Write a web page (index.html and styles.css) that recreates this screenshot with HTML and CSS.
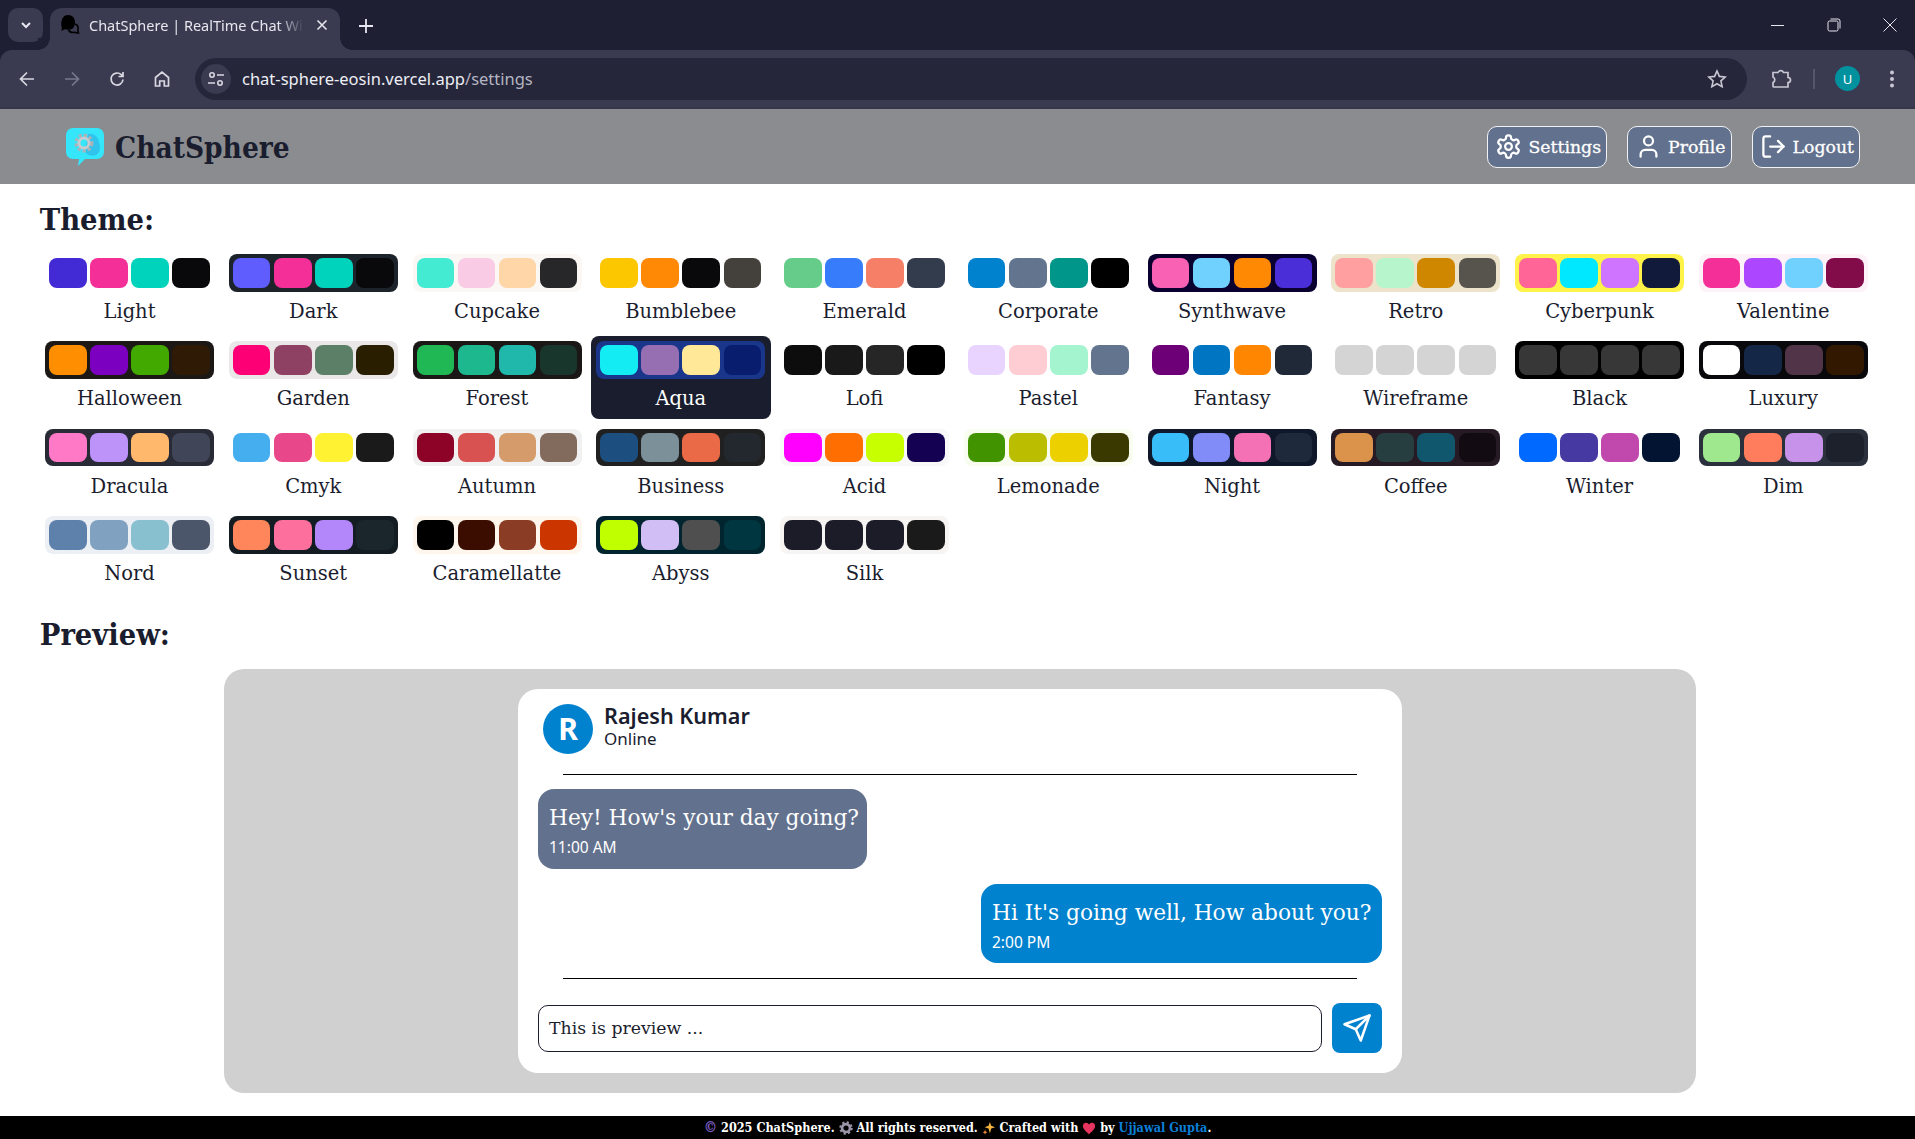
FILE: index.html
```html
<!DOCTYPE html>
<html lang="en">
<head>
<meta charset="utf-8">
<title>ChatSphere | RealTime Chat With Friends</title>
<link rel="stylesheet" href="styles.css">
</head>
<body>
<div class="page">
  <div class="chrome">
  <div class="tabstrip">
    <div class="tabsearch"><svg width="14" height="14" viewBox="0 0 14 14" fill="none" stroke="#e6e6ee" stroke-width="2"><path d="M3 5l4 4 4-4"/></svg></div>
    <div class="tab">
      <svg class="favicon" width="20" height="22" viewBox="0 0 20 22"><path d="M8 1c4.400 0 7 3 7 7 0 3-1 6-3 7-2 .8-5 .8-7 .2L1 17c1-1.500 1-3 .6-4C.4 7 2.500 1 8 1z" fill="#000"/><path d="M15 10c2.500 1 3.500 3 3 5-.3 1.500 0 3 .5 4-1.500 0-3-.5-4-.7-2.500.5-5-.5-6-2.300" fill="none" stroke="#000" stroke-width="1.600"/></svg>
      <span class="tabtitle">ChatSphere | RealTime Chat With Friends</span>
      <svg class="tabclose" width="12" height="12" viewBox="0 0 12 12" stroke="#e6e6ee" stroke-width="1.600"><path d="M1.500 1.500l9 9M10.500 1.500l-9 9"/></svg>
    </div>
    <svg class="newtab" width="14" height="14" viewBox="0 0 14 14" stroke="#e6e6ee" stroke-width="1.800"><path d="M7 0v14M0 7h14"/></svg>
    <div class="winctl">
      <svg width="14" height="14" viewBox="0 0 14 14" stroke="#e6e6ee" stroke-width="1"><path d="M0 7.500h13"/></svg>
      <svg width="14" height="14" viewBox="0 0 14 14" fill="none" stroke="#e6e6ee" stroke-width="1"><rect x="1" y="3" width="10" height="10" rx="1.500"/><path d="M3.500 1h7.500a2 2 0 0 1 2 2v7.500"/></svg>
      <svg width="14" height="14" viewBox="0 0 14 14" stroke="#e6e6ee" stroke-width="1"><path d="M.5.500l13 13M13.500.500l-13 13"/></svg>
    </div>
  </div>
  <div class="toolbar">
    <svg class="tbtn" width="18" height="18" viewBox="0 0 18 18" fill="none" stroke="#d8d8e2" stroke-width="1.700"><path d="M16 9H2.500M9 2.500L2.500 9 9 15.500"/></svg>
    <svg class="tbtn" width="18" height="18" viewBox="0 0 18 18" fill="none" stroke="#77788a" stroke-width="1.700"><path d="M2 9h13.500M9 2.500L15.500 9 9 15.500"/></svg>
    <svg class="tbtn" width="18" height="18" viewBox="0 0 18 18" fill="none" stroke="#d8d8e2" stroke-width="1.700"><path d="M15 9.500a6 6 0 1 1-1.800-4.800L15 6.500M15 2v4.500h-4.500"/></svg>
    <svg class="tbtn" width="18" height="18" viewBox="0 0 18 18" fill="none" stroke="#d8d8e2" stroke-width="1.700"><path d="M2.500 7.500L9 2l6.500 5.500V16h-4.200v-5H6.700v5H2.500z"/></svg>
    <div class="omnibox">
      <div class="sitebtn"><svg width="18" height="18" viewBox="0 0 18 18" fill="none" stroke="#d8d8e2" stroke-width="1.600"><circle cx="5" cy="5" r="2.200"/><path d="M10 5h7M1 13h7"/><circle cx="13" cy="13" r="2.200"/></svg></div>
      <span class="url">chat-sphere-eosin.vercel.app<span class="urlpath">/settings</span></span>
      <svg class="star" width="20" height="20" viewBox="0 0 20 20" fill="none" stroke="#c8c8d4" stroke-width="1.600"><path d="M10 2l2.400 5.400 5.800.6-4.300 3.900 1.200 5.700-5.100-2.900-5.100 2.900 1.200-5.700L1.800 8l5.800-.6z"/></svg>
    </div>
    <svg class="ext" width="22" height="22" viewBox="0 0 22 22" fill="none" stroke="#c8c8d4" stroke-width="1.700"><path d="M3 4.500h5a3 3 0 0 1 5.500 0H18v5a2.500 2.500 0 0 1 0 5v4.500H4a1 1 0 0 1-1-1v-3.500a3 3 0 0 0 0-5.500z"/></svg>
    <span class="tsep"></span>
    <span class="avatar-u">U</span>
    <svg class="kebab" width="6" height="18" viewBox="0 0 6 18" fill="#c8c8d4"><circle cx="3" cy="2.500" r="2"/><circle cx="3" cy="9" r="2"/><circle cx="3" cy="15.500" r="2"/></svg>
  </div>
  </div>

  <header class="navbar">
    <div class="brand">
      <svg class="logo" width="38" height="38" viewBox="0 0 38 38"><path d="M7 0h24a7 7 0 0 1 7 7v17a7 7 0 0 1-7 7H19l-7 7 1-7H7a7 7 0 0 1-7-7V7a7 7 0 0 1 7-7z" fill="#35e6fb"/><path d="M22 6c6-1 11 3 11 9 2 4 1 10-3 12-4 2-9 0-11-3z" fill="#30c4ec"/><circle cx="18" cy="15" r="7.500" fill="none" stroke="#a9b2b8" stroke-width="4" stroke-dasharray="3 2"/><circle cx="18" cy="15" r="5" fill="none" stroke="#c4cbd0" stroke-width="3"/></svg>
      <span class="brandname">ChatSphere</span>
    </div>
    <nav class="navlinks">
      <a class="navbtn"><svg class="navicon" viewBox="0 0 24 24"><path d="M12.220 2h-.44a2 2 0 0 0-2 2v.18a2 2 0 0 1-1 1.730l-.43.25a2 2 0 0 1-2 0l-.15-.08a2 2 0 0 0-2.730.73l-.22.38a2 2 0 0 0 .73 2.730l.15.1a2 2 0 0 1 1 1.720v.51a2 2 0 0 1-1 1.740l-.15.09a2 2 0 0 0-.73 2.730l.22.38a2 2 0 0 0 2.730.73l.15-.08a2 2 0 0 1 2 0l.43.25a2 2 0 0 1 1 1.730V20a2 2 0 0 0 2 2h.44a2 2 0 0 0 2-2v-.18a2 2 0 0 1 1-1.730l.43-.25a2 2 0 0 1 2 0l.15.08a2 2 0 0 0 2.730-.73l.22-.39a2 2 0 0 0-.73-2.730l-.15-.08a2 2 0 0 1-1-1.740v-.5a2 2 0 0 1 1-1.740l.15-.09a2 2 0 0 0 .73-2.730l-.22-.38a2 2 0 0 0-2.730-.73l-.15.08a2 2 0 0 1-2 0l-.43-.25a2 2 0 0 1-1-1.730V4a2 2 0 0 0-2-2z"/><circle cx="12" cy="12" r="3"/></svg>Settings</a>
      <a class="navbtn"><svg class="navicon" viewBox="0 0 24 24"><path d="M19 21v-2a4 4 0 0 0-4-4H9a4 4 0 0 0-4 4v2"/><circle cx="12" cy="7" r="4"/></svg>Profile</a>
      <a class="navbtn"><svg class="navicon" viewBox="0 0 24 24"><path d="M9 21H5a2 2 0 0 1-2-2V5a2 2 0 0 1 2-2h4"/><polyline points="16 17 21 12 16 7"/><line x1="21" y1="12" x2="9" y2="12"/></svg>Logout</a>
    </nav>
  </header>

  <main class="main">
    <h2 class="heading">Theme:</h2>
    <div class="grid">
      <div class="tile t-light"><div class="box"><i class="sw s1"></i><i class="sw s2"></i><i class="sw s3"></i><i class="sw s4"></i></div><span class="lbl">Light</span></div>
      <div class="tile t-dark"><div class="box"><i class="sw s1"></i><i class="sw s2"></i><i class="sw s3"></i><i class="sw s4"></i></div><span class="lbl">Dark</span></div>
      <div class="tile t-cupcake"><div class="box"><i class="sw s1"></i><i class="sw s2"></i><i class="sw s3"></i><i class="sw s4"></i></div><span class="lbl">Cupcake</span></div>
      <div class="tile t-bumblebee"><div class="box"><i class="sw s1"></i><i class="sw s2"></i><i class="sw s3"></i><i class="sw s4"></i></div><span class="lbl">Bumblebee</span></div>
      <div class="tile t-emerald"><div class="box"><i class="sw s1"></i><i class="sw s2"></i><i class="sw s3"></i><i class="sw s4"></i></div><span class="lbl">Emerald</span></div>
      <div class="tile t-corporate"><div class="box"><i class="sw s1"></i><i class="sw s2"></i><i class="sw s3"></i><i class="sw s4"></i></div><span class="lbl">Corporate</span></div>
      <div class="tile t-synthwave"><div class="box"><i class="sw s1"></i><i class="sw s2"></i><i class="sw s3"></i><i class="sw s4"></i></div><span class="lbl">Synthwave</span></div>
      <div class="tile t-retro"><div class="box"><i class="sw s1"></i><i class="sw s2"></i><i class="sw s3"></i><i class="sw s4"></i></div><span class="lbl">Retro</span></div>
      <div class="tile t-cyberpunk"><div class="box"><i class="sw s1"></i><i class="sw s2"></i><i class="sw s3"></i><i class="sw s4"></i></div><span class="lbl">Cyberpunk</span></div>
      <div class="tile t-valentine"><div class="box"><i class="sw s1"></i><i class="sw s2"></i><i class="sw s3"></i><i class="sw s4"></i></div><span class="lbl">Valentine</span></div>
      <div class="tile t-halloween"><div class="box"><i class="sw s1"></i><i class="sw s2"></i><i class="sw s3"></i><i class="sw s4"></i></div><span class="lbl">Halloween</span></div>
      <div class="tile t-garden"><div class="box"><i class="sw s1"></i><i class="sw s2"></i><i class="sw s3"></i><i class="sw s4"></i></div><span class="lbl">Garden</span></div>
      <div class="tile t-forest"><div class="box"><i class="sw s1"></i><i class="sw s2"></i><i class="sw s3"></i><i class="sw s4"></i></div><span class="lbl">Forest</span></div>
      <div class="tile active t-aqua"><div class="box"><i class="sw s1"></i><i class="sw s2"></i><i class="sw s3"></i><i class="sw s4"></i></div><span class="lbl">Aqua</span></div>
      <div class="tile t-lofi"><div class="box"><i class="sw s1"></i><i class="sw s2"></i><i class="sw s3"></i><i class="sw s4"></i></div><span class="lbl">Lofi</span></div>
      <div class="tile t-pastel"><div class="box"><i class="sw s1"></i><i class="sw s2"></i><i class="sw s3"></i><i class="sw s4"></i></div><span class="lbl">Pastel</span></div>
      <div class="tile t-fantasy"><div class="box"><i class="sw s1"></i><i class="sw s2"></i><i class="sw s3"></i><i class="sw s4"></i></div><span class="lbl">Fantasy</span></div>
      <div class="tile t-wireframe"><div class="box"><i class="sw s1"></i><i class="sw s2"></i><i class="sw s3"></i><i class="sw s4"></i></div><span class="lbl">Wireframe</span></div>
      <div class="tile t-black"><div class="box"><i class="sw s1"></i><i class="sw s2"></i><i class="sw s3"></i><i class="sw s4"></i></div><span class="lbl">Black</span></div>
      <div class="tile t-luxury"><div class="box"><i class="sw s1"></i><i class="sw s2"></i><i class="sw s3"></i><i class="sw s4"></i></div><span class="lbl">Luxury</span></div>
      <div class="tile t-dracula"><div class="box"><i class="sw s1"></i><i class="sw s2"></i><i class="sw s3"></i><i class="sw s4"></i></div><span class="lbl">Dracula</span></div>
      <div class="tile t-cmyk"><div class="box"><i class="sw s1"></i><i class="sw s2"></i><i class="sw s3"></i><i class="sw s4"></i></div><span class="lbl">Cmyk</span></div>
      <div class="tile t-autumn"><div class="box"><i class="sw s1"></i><i class="sw s2"></i><i class="sw s3"></i><i class="sw s4"></i></div><span class="lbl">Autumn</span></div>
      <div class="tile t-business"><div class="box"><i class="sw s1"></i><i class="sw s2"></i><i class="sw s3"></i><i class="sw s4"></i></div><span class="lbl">Business</span></div>
      <div class="tile t-acid"><div class="box"><i class="sw s1"></i><i class="sw s2"></i><i class="sw s3"></i><i class="sw s4"></i></div><span class="lbl">Acid</span></div>
      <div class="tile t-lemonade"><div class="box"><i class="sw s1"></i><i class="sw s2"></i><i class="sw s3"></i><i class="sw s4"></i></div><span class="lbl">Lemonade</span></div>
      <div class="tile t-night"><div class="box"><i class="sw s1"></i><i class="sw s2"></i><i class="sw s3"></i><i class="sw s4"></i></div><span class="lbl">Night</span></div>
      <div class="tile t-coffee"><div class="box"><i class="sw s1"></i><i class="sw s2"></i><i class="sw s3"></i><i class="sw s4"></i></div><span class="lbl">Coffee</span></div>
      <div class="tile t-winter"><div class="box"><i class="sw s1"></i><i class="sw s2"></i><i class="sw s3"></i><i class="sw s4"></i></div><span class="lbl">Winter</span></div>
      <div class="tile t-dim"><div class="box"><i class="sw s1"></i><i class="sw s2"></i><i class="sw s3"></i><i class="sw s4"></i></div><span class="lbl">Dim</span></div>
      <div class="tile t-nord"><div class="box"><i class="sw s1"></i><i class="sw s2"></i><i class="sw s3"></i><i class="sw s4"></i></div><span class="lbl">Nord</span></div>
      <div class="tile t-sunset"><div class="box"><i class="sw s1"></i><i class="sw s2"></i><i class="sw s3"></i><i class="sw s4"></i></div><span class="lbl">Sunset</span></div>
      <div class="tile t-caramellatte"><div class="box"><i class="sw s1"></i><i class="sw s2"></i><i class="sw s3"></i><i class="sw s4"></i></div><span class="lbl">Caramellatte</span></div>
      <div class="tile t-abyss"><div class="box"><i class="sw s1"></i><i class="sw s2"></i><i class="sw s3"></i><i class="sw s4"></i></div><span class="lbl">Abyss</span></div>
      <div class="tile t-silk"><div class="box"><i class="sw s1"></i><i class="sw s2"></i><i class="sw s3"></i><i class="sw s4"></i></div><span class="lbl">Silk</span></div>
    </div>

    <h2 class="heading preview-heading">Preview:</h2>
    <section class="preview">
      <div class="card">
        <div class="chathead">
          <div class="avatar">R</div>
          <div class="who"><div class="name">Rajesh Kumar</div><div class="status">Online</div></div>
        </div>
        <hr class="rule">
        <div class="bubble left"><div class="msg">Hey! How's your day going?</div><div class="time">11:00 AM</div></div>
        <div class="bubble right"><div class="msg">Hi It's going well, How about you?</div><div class="time">2:00 PM</div></div>
        <hr class="rule rule2">
        <div class="composer">
          <div class="input">This is preview ...</div>
          <div class="send"><svg width="30" height="30" viewBox="0 0 24 24" fill="none" stroke="#fff" stroke-width="2" stroke-linecap="round" stroke-linejoin="round"><path d="m22 2-7 20-4-9-9-4Z"/><path d="M22 2 11 13"/></svg></div>
        </div>
      </div>
    </section>
  </main>

  <footer class="footer"><span class="copy">©</span> 2025 ChatSphere. <svg class="emoji" viewBox="0 0 16 16"><circle cx="8" cy="8" r="4.500" fill="none" stroke="#9c94a8" stroke-width="3"/><circle cx="8" cy="8" r="6.500" fill="none" stroke="#9c94a8" stroke-width="2.400" stroke-dasharray="2.500 2.600"/></svg> All rights reserved. <svg class="emoji" viewBox="0 0 16 16"><path d="M9 1l1.500 4.500L15 7l-4.500 1.500L9 14 7.500 8.500 3 7l4.500-1.500z" fill="#f4b53f"/><path d="M3.500 10l.8 2 2 .8-2 .8-.8 2-.8-2-2-.8 2-.8z" fill="#f08a3c"/></svg> Crafted with <svg class="emoji" viewBox="0 0 16 16"><path d="M8 15C3 11 1 8.500 1 5.500A3.700 3.700 0 0 1 8 4a3.700 3.700 0 0 1 7 1.500C15 8.500 13 11 8 15z" fill="#e8355f"/></svg> by <span class="author">Ujjawal Gupta</span>.</footer>
</div>
</body>
</html>
```
FILE: styles.css
```css
* { box-sizing: border-box; }
html, body { margin: 0; padding: 0; height: 100%; background: #fff; overflow: hidden; }
.page { display: flex; flex-direction: column; height: 1139px; font-family: "DejaVu Serif", serif; color: #1a1d2e; }

/* browser chrome */
.chrome { background: #1e1f33; flex: none; }
.tabstrip { height: 50px; display: flex; align-items: flex-start; padding: 8px 0 0 8px; }
.tabsearch { width: 35px; height: 34px; border-radius: 10px; background: #3a3b50; display: flex; align-items: center; justify-content: center; }
.tab { position: relative; width: 290px; height: 42px; margin-left: 7px; background: #3a3b50; border-radius: 12px 12px 0 0; display: flex; align-items: center; padding: 0 12px 8px 10px; font: 14.5px "Noto Sans", sans-serif; color: #e6e6ee; }
.tab::before, .tab::after { content: ""; position: absolute; bottom: 0; width: 12px; height: 12px; }
.tab::before { left: -12px; background: radial-gradient(circle at 0 0, #1e1f33 11.5px, #3a3b50 12px); }
.tab::after { right: -12px; background: radial-gradient(circle at 100% 0, #1e1f33 11.5px, #3a3b50 12px); }
.favicon { flex: none; }
.tabtitle { flex: 1; margin-left: 9px; white-space: nowrap; overflow: hidden; -webkit-mask-image: linear-gradient(90deg, #000 88%, transparent); mask-image: linear-gradient(90deg, #000 88%, transparent); }
.tabclose { flex: none; margin-left: 12px; }
.newtab { margin: 11px 0 0 19px; }
.winctl { margin-left: auto; display: flex; gap: 42px; padding: 10px 18px 0 0; }
.toolbar { height: 59px; background: #3a3b50; border-radius: 12px 12px 0 0; display: flex; align-items: center; padding: 0 0 0 18px; border-bottom: 2px solid #35364a; }
.tbtn { margin-right: 27px; flex: none; }
.tbtn:nth-child(4) { margin-right: 24px; }
.omnibox { width: 1552px; height: 42px; border-radius: 21px; background: #25263a; display: flex; align-items: center; padding: 0 20px 0 5px; flex: none; }
.sitebtn { width: 30px; height: 30px; margin-left: 1px; border-radius: 50%; background: #3a3b50; display: flex; align-items: center; justify-content: center; }
.url { margin-left: 11px; font: 16.5px "Noto Sans", sans-serif; color: #eeeef4; white-space: nowrap; }
.urlpath { color: #b4b4c2; }
.star { margin-left: auto; }
.ext { margin-left: 23px; }
.tsep { width: 2px; height: 20px; background: #55566a; margin-left: 21px; }
.avatar-u { width: 25px; height: 25px; margin-left: 20px; border-radius: 50%; background: #00919f; color: #fff; font: 13px "Noto Sans", sans-serif; display: flex; align-items: center; justify-content: center; }
.kebab { margin-left: 29px; }

/* navbar */
.navbar { height: 75px; background: #8b8c8f; display: flex; align-items: center; justify-content: space-between; padding: 0 55px 0 66px; flex: none; }
.brand { display: flex; align-items: center; gap: 11px; }
.logo { flex: none; }
.brandname { padding-top: 2px; font-family: "DejaVu Serif Condensed", "DejaVu Serif", serif; font-size: 29.5px; font-weight: 700; color: #1a1d2e; }
.navlinks { display: flex; gap: 20px; }
.navbtn { height: 42px; display: flex; align-items: center; gap: 6px; padding: 0 5px 0 7px; background: #62718d; border: 1.5px solid #f2f2f2; border-radius: 10px; color: #fff; font-size: 17.3px; -webkit-text-stroke: .3px #fff; }
.navicon { width: 27px; height: 27px; fill: none; stroke: #fff; stroke-width: 2; stroke-linecap: round; stroke-linejoin: round; flex: none; }

/* main */
.main { flex: 1; padding: 14px 0 0 39.75px; }
.heading { margin: 0; font-family: "DejaVu Serif Condensed", "DejaVu Serif", serif; font-size: 30.5px; line-height: 42px; font-weight: 700; color: #1a1d2e; }
.grid { margin-top: 9px; display: grid; grid-template-columns: repeat(10, 179.5px); column-gap: 4.25px; row-gap: 4.4px; }
.tile { height: 83px; padding: 5px 5.25px; border-radius: 8px; display: flex; flex-direction: column; align-items: stretch; }
.box { height: 37.5px; padding: 4px; border-radius: 8px; background: var(--b); display: flex; gap: 3.4px; }
.sw { flex: 1; border-radius: 8px; }
.s1 { background: var(--c1); }
.s2 { background: var(--c2); }
.s3 { background: var(--c3); }
.s4 { background: var(--c4); }
.lbl { margin-top: 8.5px; font-size: 19.5px; line-height: 24px; text-align: center; color: #1a1d2e; }
.tile.active { background: #1a1d2e; }
.tile.active .lbl { color: #fff; }

.preview-heading { margin-top: 19.2px; }
.preview { width: 1472px; height: 424px; margin: 13.5px 0 0 184.25px; padding-top: 20px; background: #d0d0d0; border-radius: 20px; }
.card { width: 884px; height: 384.500px; margin: 0 auto; padding: 15px 20px 0; background: #fff; border-radius: 20px; display: flex; flex-direction: column; }
.chathead { display: flex; align-items: center; gap: 11px; padding-left: 5px; height: 50px; flex: none; }
.avatar { width: 50px; height: 50px; border-radius: 50%; background: #0082ce; color: #fff; font: 700 30px "Noto Sans", sans-serif; display: flex; align-items: center; justify-content: center; }
.who { padding-bottom: 5px; }
.name { font: 600 21.6px/26px "Noto Sans", sans-serif; color: #1a1d2e; }
.status { font: 17px/20px "Noto Sans", sans-serif; color: #1a1d2e; }
.rule { width: 794px; height: 1px; margin: 20px 25px .5px; background: #000; border: 0; flex: none; }
.bubble { margin-top: 14px; padding: 11px; border-radius: 16px; color: #fff; flex: none; }
.bubble.left { align-self: flex-start; width: 329px; height: 80px; background: #62718d; }
.bubble.right { align-self: flex-end; width: 401px; height: 79px; margin-top: 15px; background: #0082ce; }
.msg { padding-top: 1px; font-size: 21.7px; line-height: 33px; white-space: nowrap; }
.time { margin-top: 3px; font: 15.5px/20px "Noto Sans", sans-serif; }
.rule2 { margin-top: 15px; }
.composer { margin-top: 23.5px; display: flex; align-items: center; gap: 10px; }
.input { width: 784px; height: 47px; border: 1.5px solid #1a1d2e; border-radius: 10px; padding-left: 10px; display: flex; align-items: center; font-size: 17.3px; color: #1a1d2e; }
.send { width: 50px; height: 50px; border-radius: 8px; background: #0082ce; display: flex; align-items: center; justify-content: center; }

/* footer */
.footer { height: 23px; background: #000; color: #fff; line-height: 23px; text-align: center; font-family: "DejaVu Serif Condensed", "DejaVu Serif", serif; font-size: 12.55px; font-weight: 700; white-space: nowrap; flex: none; }
.copy { color: #7a5cc0; font-size: 15px; }
.author { color: #0a7fd8; }
.emoji { width: 14px; height: 14px; vertical-align: -2.5px; }

/* theme palettes */
.t-light { --b:#ffffff; --c1:#422ad5; --c2:#f43098; --c3:#00d3bb; --c4:#09090b; }
.t-dark { --b:#1d232a; --c1:#605dff; --c2:#f43098; --c3:#00d3bb; --c4:#09090b; }
.t-cupcake { --b:#faf7f5; --c1:#44ebd3; --c2:#f9cbe5; --c3:#ffd6a7; --c4:#27272a; }
.t-bumblebee { --b:#ffffff; --c1:#fdc700; --c2:#ff8904; --c3:#09090b; --c4:#44403b; }
.t-emerald { --b:#ffffff; --c1:#66cc8a; --c2:#377cfb; --c3:#f68067; --c4:#333c4d; }
.t-corporate { --b:#ffffff; --c1:#0082ce; --c2:#62748e; --c3:#009689; --c4:#000000; }
.t-synthwave { --b:#09002f; --c1:#f861b4; --c2:#71d1fe; --c3:#ff8903; --c4:#4a2fd8; }
.t-retro { --b:#ece3ca; --c1:#ff9fa0; --c2:#b7f6cd; --c3:#d08700; --c4:#57534d; }
.t-cyberpunk { --b:#fff248; --c1:#ff6596; --c2:#00e8ff; --c3:#ce74ff; --c4:#111a3b; }
.t-valentine { --b:#fcf2f8; --c1:#f43098; --c2:#ad46ff; --c3:#71d1fe; --c4:#820b4a; }
.t-halloween { --b:#1b1816; --c1:#ff8f00; --c2:#7c00c0; --c3:#42a900; --c4:#2f1b05; }
.t-garden { --b:#e9e7e7; --c1:#fe0075; --c2:#8e4162; --c3:#5c7f67; --c4:#291e00; }
.t-forest { --b:#1b1717; --c1:#1fb854; --c2:#1eb88e; --c3:#1fb8ab; --c4:#19362d; }
.t-aqua { --b:#1a368b; --c1:#13ecf3; --c2:#966fb3; --c3:#ffe999; --c4:#091d6e; }
.t-lofi { --b:#ffffff; --c1:#0d0d0d; --c2:#1a1919; --c3:#262626; --c4:#000000; }
.t-pastel { --b:#ffffff; --c1:#e9d4ff; --c2:#fecdd3; --c3:#a4f4cf; --c4:#62748e; }
.t-fantasy { --b:#ffffff; --c1:#6d0076; --c2:#0075c2; --c3:#ff8600; --c4:#1f2937; }
.t-wireframe { --b:#ffffff; --c1:#d4d4d4; --c2:#d4d4d4; --c3:#d4d4d4; --c4:#d4d4d4; }
.t-black { --b:#000000; --c1:#373737; --c2:#373737; --c3:#373737; --c4:#373737; }
.t-luxury { --b:#09090b; --c1:#ffffff; --c2:#152747; --c3:#513448; --c4:#331800; }
.t-dracula { --b:#282a36; --c1:#ff79c6; --c2:#bd93f9; --c3:#ffb86c; --c4:#414558; }
.t-cmyk { --b:#ffffff; --c1:#45aeee; --c2:#e8488a; --c3:#fff232; --c4:#1a1a1a; }
.t-autumn { --b:#f1f1f1; --c1:#8c0327; --c2:#d85251; --c3:#d59b6a; --c4:#826a5c; }
.t-business { --b:#202020; --c1:#1c4e80; --c2:#7c909a; --c3:#ea6947; --c4:#23282e; }
.t-acid { --b:#f8f8f8; --c1:#ff00ff; --c2:#ff6e00; --c3:#c8ff00; --c4:#140152; }
.t-lemonade { --b:#f8fdef; --c1:#419400; --c2:#bbbd00; --c3:#edd000; --c4:#3a3a00; }
.t-night { --b:#0f172a; --c1:#38bdf8; --c2:#818cf8; --c3:#f471b5; --c4:#1e293b; }
.t-coffee { --b:#261b25; --c1:#db924b; --c2:#263e3f; --c3:#10576d; --c4:#120c12; }
.t-winter { --b:#ffffff; --c1:#0069ff; --c2:#463aa2; --c3:#c148ac; --c4:#021431; }
.t-dim { --b:#2a303c; --c1:#9fe88d; --c2:#ff7d5c; --c3:#c792e9; --c4:#1c212b; }
.t-nord { --b:#eceff4; --c1:#5e81ac; --c2:#81a1c1; --c3:#88c0d0; --c4:#4c566a; }
.t-sunset { --b:#121c22; --c1:#ff865b; --c2:#fd6f9c; --c3:#b387fa; --c4:#1b262c; }
.t-caramellatte { --b:#fff7ed; --c1:#000000; --c2:#3a0d00; --c3:#8a3c24; --c4:#cb3600; }
.t-abyss { --b:#00252f; --c1:#c0ff00; --c2:#d0bef4; --c3:#4f4f4f; --c4:#003640; }
.t-silk { --b:#f7f5f3; --c1:#1c1c29; --c2:#1c1c29; --c3:#1c1c29; --c4:#1a1a1a; }
```
